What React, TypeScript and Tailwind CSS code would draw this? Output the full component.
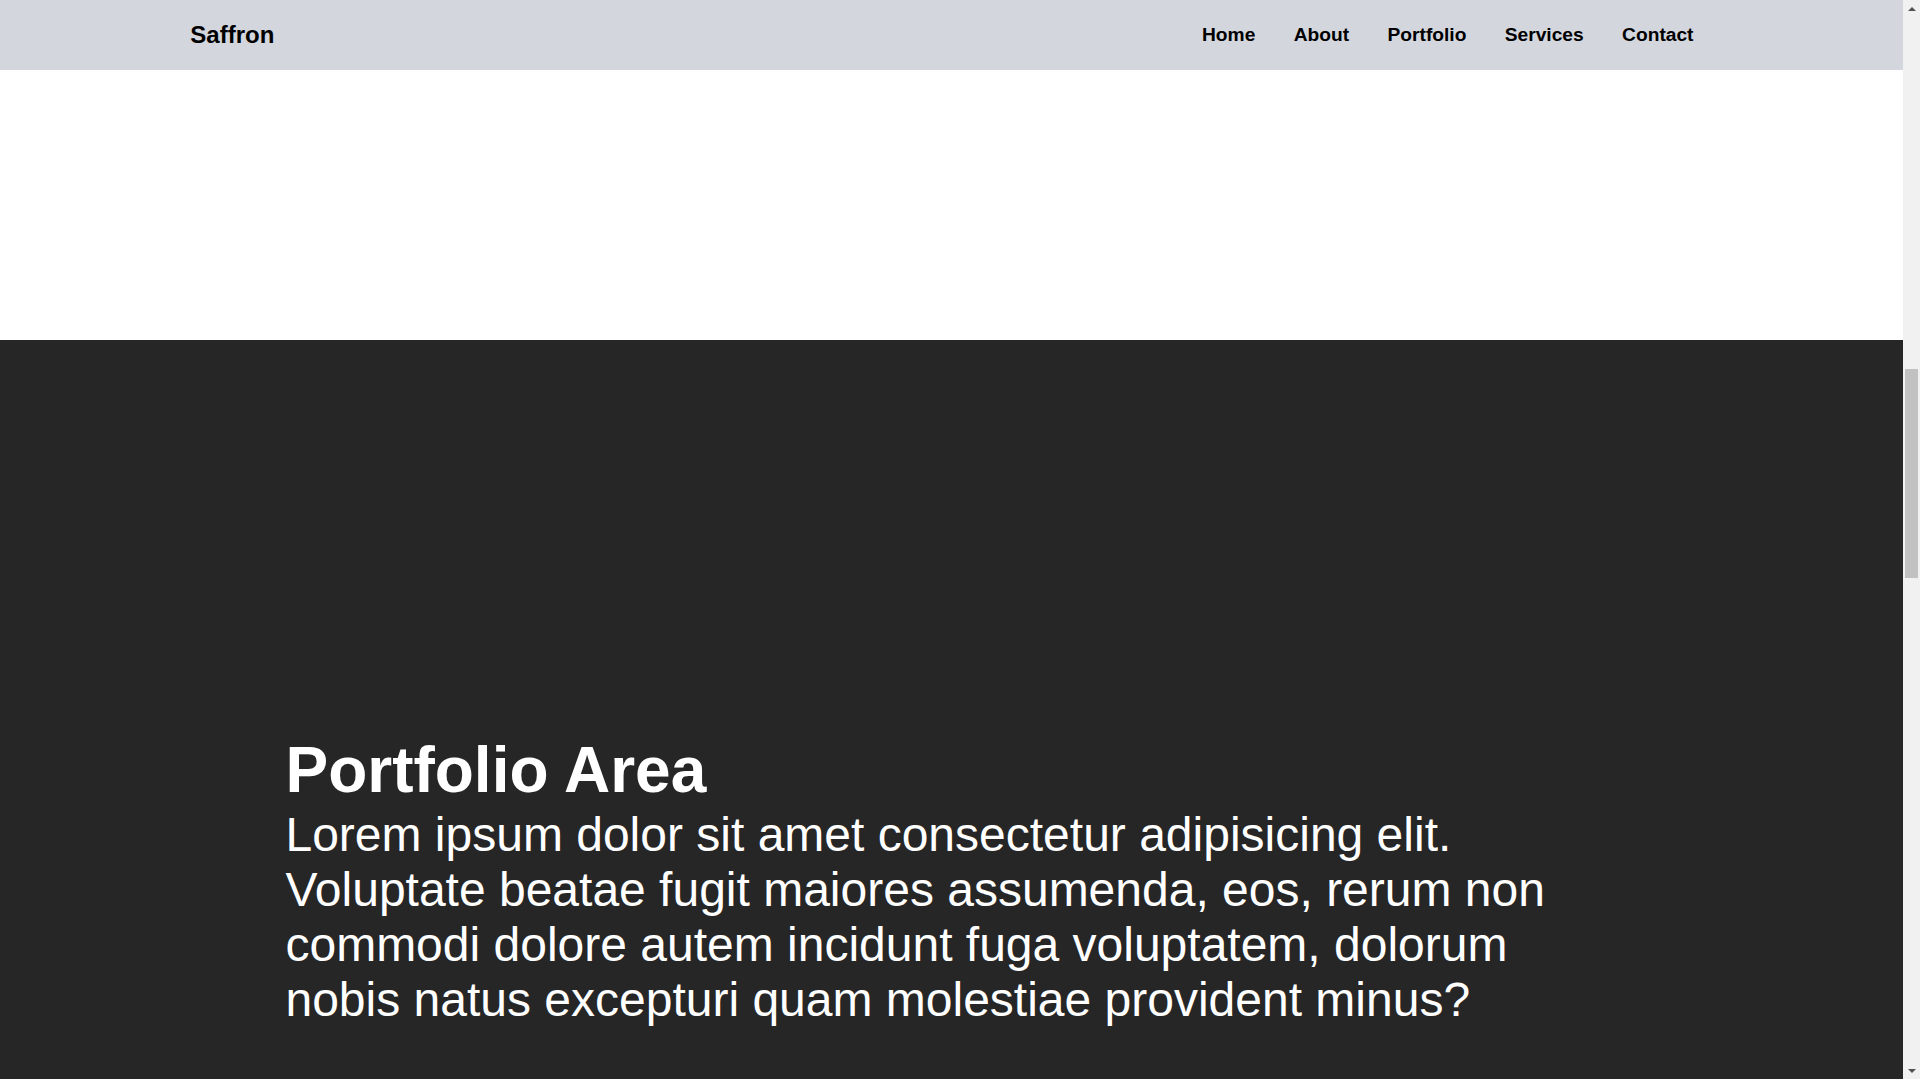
import { useLayoutEffect, useRef } from "react";

const links = ["Home", "About", "Portfolio", "Services", "Contact"];

const lorem =
    "Lorem ipsum dolor sit amet consectetur adipisicing elit. Voluptate beatae fugit maiores assumenda, eos, rerum non commodi dolore autem incidunt fuga voluptatem, dolorum nobis natus excepturi quam molestiae provident minus?";

function Section({ id, title, dark }: { id: string; title: string; dark: boolean }) {
    return (
        <section
            id={id}
            className={`h-screen flex items-center justify-center ${dark ? "bg-[#262626] text-white" : "bg-white text-black"}`}
        >
            <div className="w-[70%]">
                <h1 className="text-[64px] font-bold leading-[normal]">{title}</h1>
                <p className="text-[48px] leading-[normal]">{lorem}</p>
            </div>
        </section>
    );
}

// classic browser scrollbar, drawn since the headless shot hides the real one
function Scrollbar() {
    return (
        <div className="w-[17px] h-screen bg-[#f1f1f1] flex flex-col">
            <div className="h-[17px] flex items-center justify-center">
                <div className="w-0 h-0 border-x-[4px] border-x-transparent border-b-[4px] border-b-[#505050]" />
            </div>
            <div className="h-[352px]" />
            <div className="mx-[2px] h-[209px] bg-[#c1c1c1]" />
            <div className="flex-1" />
            <div className="h-[17px] flex items-center justify-center">
                <div className="w-0 h-0 border-x-[4px] border-x-transparent border-t-[4px] border-t-[#505050]" />
            </div>
        </div>
    );
}

export default function App() {
    const page = useRef<HTMLDivElement>(null);

    // the shot is taken with the page scrolled down to the portfolio section
    useLayoutEffect(() => {
        if (page.current) page.current.scrollTop = window.innerHeight * 2 - 340;
    }, []);

    return (
        <div className="flex h-screen overflow-hidden font-['Liberation_Sans',Arial,sans-serif]">
            <div className="relative flex-1 min-w-0">
                <nav className="absolute top-0 left-0 right-0 z-10 h-[70px] bg-[#d3d6dd]">
                    <div className="w-[80%] h-full mx-auto flex items-center justify-between">
                        <a href="#home" className="text-2xl font-bold text-black">
                            Saffron
                        </a>
                        <ul className="flex items-center">
                            {links.map((l) => (
                                <li key={l}>
                                    <a
                                        href={`#${l.toLowerCase()}`}
                                        className="px-[19.2px] text-[19.2px] font-bold text-black"
                                    >
                                        {l}
                                    </a>
                                </li>
                            ))}
                        </ul>
                    </div>
                </nav>
                <div ref={page} className="h-full overflow-y-scroll [scrollbar-width:none]">
                    <Section id="home" title="Home Area" dark={true} />
                    <Section id="about" title="About Area" dark={false} />
                    <Section id="portfolio" title="Portfolio Area" dark={true} />
                    <Section id="services" title="Services Area" dark={false} />
                    <Section id="contact" title="Contact Area" dark={true} />
                </div>
            </div>
            <Scrollbar />
        </div>
    );
}
